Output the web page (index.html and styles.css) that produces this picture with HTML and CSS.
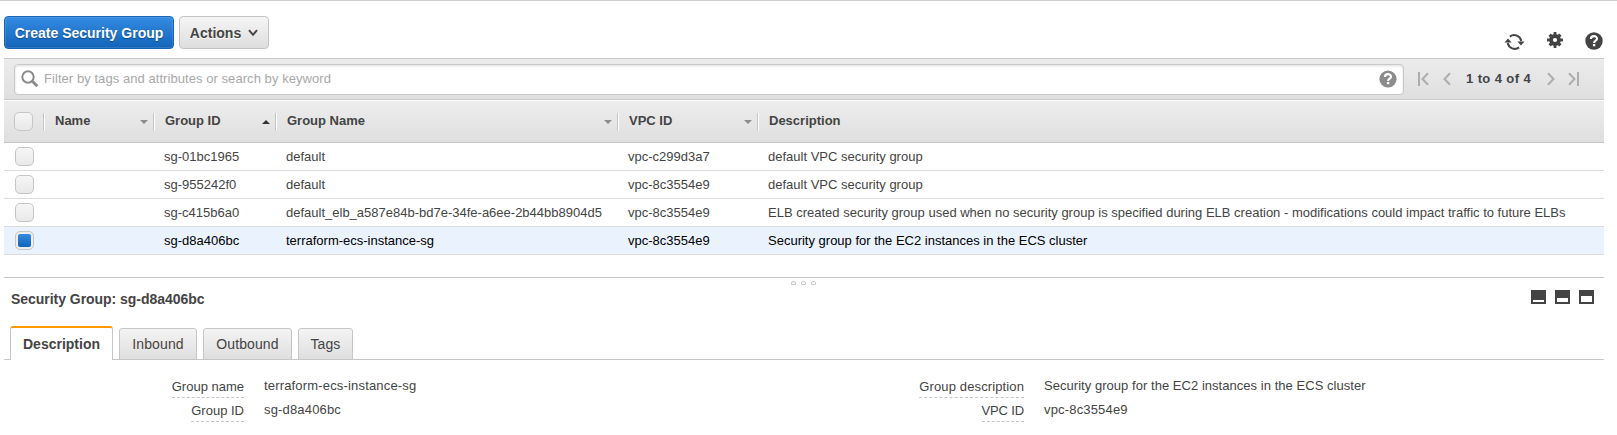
FILE: index.html
```html
<!DOCTYPE html>
<html lang="en">
<head>
<meta charset="utf-8">
<title>Security Groups</title>
<link rel="stylesheet" href="styles.css">
</head>
<body>
<main class="console">
  <div class="toolbar">
    <button class="btn primary"><span>Create Security Group</span></button>
    <button class="btn actions"><span>Actions</span><svg width="10" height="8" viewBox="0 0 10 8"><path d="M1 1.2 5 5.8 9 1.2" fill="none" stroke="#444" stroke-width="2"/></svg></button>
    <div class="tools">
      <svg class="refresh" width="21" height="18" viewBox="0 0 20 18"><g fill="none" stroke="#444" stroke-width="2"><path d="M5.4 3.6A7.2 7.2 0 0 1 16.8 8"/><path d="M14.6 14.4A7.2 7.2 0 0 1 3.2 10"/></g><path d="M12.8 8.4H20l-3.5 4zM0 9.6h7.2L3.5 5.6z" fill="#444"/></svg>
      <svg class="gear" width="16" height="16" viewBox="0 0 16 16"><g fill="#444"><circle cx="8" cy="8" r="5.9"/><g><rect x="6.6" width="2.8" height="16"/><rect y="6.6" width="16" height="2.8"/></g><g transform="rotate(45 8 8)"><rect x="6.4" y=".4" width="3.2" height="15.2"/><rect x=".4" y="6.4" width="15.2" height="3.2"/></g></g><circle cx="8" cy="8" r="2.1" fill="#fff"/></svg>
      <svg class="help" width="18" height="18" viewBox="0 0 18 18"><circle cx="9" cy="9" r="8.7" fill="#444"/><path d="M5.9 7C5.9 3.2 12 3.2 12 6.7 12 8.7 9.1 8.7 9.1 11" fill="none" stroke="#fff" stroke-width="2.1"/><rect x="7.9" y="12" width="2.4" height="2.3" fill="#fff"/></svg>
    </div>
  </div>

  <div class="filterbar">
    <div class="search">
      <svg width="18" height="18" viewBox="0 0 18 18"><circle cx="7" cy="7" r="5.7" fill="none" stroke="#8c8c8c" stroke-width="2"/><path d="m11.3 11.3 5 5" stroke="#8c8c8c" stroke-width="3"/></svg>
      <span class="placeholder">Filter by tags and attributes or search by keyword</span>
      <svg class="hint" width="18" height="18" viewBox="0 0 18 18"><circle cx="9" cy="9" r="8.6" fill="#8c8c8c"/><path d="M5.9 7C5.9 3.2 12 3.2 12 6.7 12 8.7 9.1 8.7 9.1 11" fill="none" stroke="#fff" stroke-width="2.1"/><rect x="7.9" y="12" width="2.4" height="2.3" fill="#fff"/></svg>
    </div>
    <div class="pager">
      <svg width="33" height="14" viewBox="0 0 33 14"><path d="M1 0v14M10 1.2 4.5 7l5.5 5.8M32 1.2 26.5 7l5.5 5.8" fill="none" stroke="#adadad" stroke-width="2"/></svg>
      <span>1 to 4 of 4</span>
      <svg width="32" height="14" viewBox="0 0 32 14"><path d="M1 1.2 6.5 7 1 12.8M22 1.2 27.5 7 22 12.8M31 0v14" fill="none" stroke="#adadad" stroke-width="2"/></svg>
    </div>
  </div>

  <div class="grid head">
    <div class="pick"><i class="box"></i></div>
    <div class="col"><span>Name</span><i class="sort"></i></div>
    <div class="col"><span>Group ID</span><i class="sort up"></i></div>
    <div class="col"><span>Group Name</span><i class="sort"></i></div>
    <div class="col"><span>VPC ID</span><i class="sort"></i></div>
    <div class="col"><span>Description</span></div>
  </div>
  <div class="grid row"><div class="pick"><i class="box"></i></div><span></span><span>sg-01bc1965</span><span>default</span><span>vpc-c299d3a7</span><span>default VPC security group</span></div>
  <div class="grid row"><div class="pick"><i class="box"></i></div><span></span><span>sg-955242f0</span><span>default</span><span>vpc-8c3554e9</span><span>default VPC security group</span></div>
  <div class="grid row"><div class="pick"><i class="box"></i></div><span></span><span>sg-c415b6a0</span><span>default_elb_a587e84b-bd7e-34fe-a6ee-2b44bb8904d5</span><span>vpc-8c3554e9</span><span>ELB created security group used when no security group is specified during ELB creation - modifications could impact traffic to future ELBs</span></div>
  <div class="grid row selected"><div class="pick"><i class="box checked"></i></div><span></span><span>sg-d8a406bc</span><span>terraform-ecs-instance-sg</span><span>vpc-8c3554e9</span><span>Security group for the EC2 instances in the ECS cluster</span></div>

  <div class="splitter"><i></i><i></i><i></i></div>
  <div class="detail-head">
    <h2>Security Group: sg-d8a406bc</h2>
    <div class="panes"><i class="pane low"></i><i class="pane mid"></i><i class="pane high"></i></div>
  </div>
  <div class="tabs">
    <div class="tab active"><span>Description</span></div>
    <div class="tab inbound"><span>Inbound</span></div>
    <div class="tab outbound"><span>Outbound</span></div>
    <div class="tab tags"><span>Tags</span></div>
  </div>
  <div class="details">
    <div class="label"><span>Group name</span></div><div class="value code">terraform-ecs-instance-sg</div>
    <div class="label"><span class="wide">Group description</span></div><div class="value">Security group for the EC2 instances in the ECS cluster</div>
    <div class="label"><span>Group ID</span></div><div class="value code">sg-d8a406bc</div>
    <div class="label"><span class="narrow">VPC ID</span></div><div class="value code">vpc-8c3554e9</div>
  </div>
</main>
</body>
</html>
```
FILE: styles.css
```css
* { box-sizing: border-box; }
body {
  margin: 0;
  height: 435px;
  overflow: hidden;
  border-top: 1px solid #ccc;
  background: #fff;
  color: #444;
  font: 13px/16px "Liberation Sans", Arial, sans-serif;
}
svg { display: block; flex: none; }
.console { width: 1600px; margin-left: 4px; }
.console .toolbar { width: 1599px; }

.toolbar { display: flex; height: 57px; padding-top: 15px; gap: 5px; }
.btn {
  display: flex;
  align-items: center;
  justify-content: center;
  height: 33px;
  padding: 0;
  border: 1px solid #c4c4c4;
  border-radius: 4px;
  background: linear-gradient(#f5f5f5, #dedede);
  color: #444;
  font: bold 14px/16px "Liberation Sans", Arial, sans-serif;
  white-space: nowrap;
}
.primary {
  width: 170px;
  border-color: #1865b8;
  background: linear-gradient(#348be2, #1264b8);
  box-shadow: inset 0 0 0 1px #ffffff20;
  color: #fff;
  text-shadow: 0 1px 1px #0e4c90;
}
.actions { width: 90px; gap: 7px; text-shadow: 0 1px #fff; }
.tools { display: flex; margin-left: auto; }
.refresh { margin-top: 17px; }
.gear { margin: 16px 22px 0 22px; }
.help { margin-top: 16px; }

.filterbar {
  display: flex;
  align-items: center;
  height: 42px;
  padding-left: 10px;
  width: 1600px;
  border: solid #c9c9c9;
  border-width: 1px 0;
  background: linear-gradient(#ececec, #dfdfdf);
}
.search {
  display: flex;
  flex: none;
  align-items: center;
  width: 1390px;
  height: 31px;
  padding: 0 6px;
  border: 1px solid #c8c8c8;
  border-radius: 4px;
  background: #fff;
  box-shadow: inset 0 1px 3px #0002;
  color: #a8a8a8;
}
.placeholder { margin-left: 5px; letter-spacing: .06px; }
.hint { margin-left: auto; }
.pager { display: flex; align-items: center; margin-left: 14px; }
.pager span { width: 66px; margin: 0 15px; white-space: nowrap; font-weight: bold; letter-spacing: .4px; }

.grid { display: grid; grid-template-columns: 40px 110px 122px 342px 140px 1fr; align-items: center; }
.head {
  height: 43px;
  border-top: 1px solid #fff;
  border-bottom: 1px solid #c4c4c4;
  background: linear-gradient(#ededed, #dfdfdf);
  font-weight: bold;
}
.pick { padding-left: 11px; }
.head .pick { padding-left: 10px; }
.col {
  display: flex;
  align-items: center;
  justify-content: space-between;
  height: 18px;
  padding: 0 6px 0 10px;
  border-left: 1px solid #fff;
  box-shadow: -1px 0 #c6c6c6;
}
.col span { padding-bottom: 2px; }
.sort { border: solid transparent; border-width: 4px 4px 0; border-top-color: #8c8c8c; }
.sort.up { border-width: 0 4px 4px; border-bottom-color: #333; }
.box {
  display: block;
  width: 19px;
  height: 19px;
  border: 1px solid #c6c6c6;
  border-radius: 5px;
  background: linear-gradient(#f6f6f6, #e8e8e8);
}
.checked { padding: 2px; background: #ededed; }
.checked::before {
  content: "";
  display: block;
  width: 13px;
  height: 13px;
  border-radius: 2px;
  background: linear-gradient(#348be2, #1264b8);
}
.row { height: 28px; border-bottom: 1px solid #dcdcdc; }
.row span { padding-left: 10px; white-space: nowrap; }
.selected { background: #eaf2fe; color: #000; }

.splitter {
  display: flex;
  justify-content: center;
  gap: 5px;
  height: 14px;
  margin-top: 22px;
  padding: 3px 2px 0 0;
  border-top: 1px solid #c6c6c6;
}
.splitter i { width: 5px; height: 4px; border: 1px solid #c8c8c8; border-radius: 2px 2px 0 0; }
.detail-head { display: flex; justify-content: space-between; height: 35px; padding: 0 10px 0 7px; }
h2 { margin: 0; font-size: 14px; line-height: 16px; white-space: nowrap; letter-spacing: -.04px; }
.panes { display: flex; gap: 9px; }
.pane { width: 15px; height: 14px; margin-top: -1px; border: 2px solid #444; background: #fff; }
.low { border-top-width: 10px; }
.mid { border-top-width: 8px; }
.high { border-top-width: 6px; }

.tabs { display: flex; align-items: flex-end; gap: 6px; height: 34px; padding-left: 6px; box-shadow: inset 0 -1px #c6c6c6; }
.tab {
  display: flex;
  align-items: center;
  justify-content: center;
  height: 32px;
  border: 1px solid #c6c6c6;
  border-radius: 3px 3px 0 0;
  background: linear-gradient(#f4f4f4, #dfdfdf);
  font-size: 14px;
  letter-spacing: .1px;
  white-space: nowrap;
}
.active { width: 103px; height: 34px; border-top: 2px solid #f90; border-bottom: 0; background: #fff; font-weight: bold; letter-spacing: 0; }
.inbound { width: 78px; }
.outbound { width: 89px; }
.tags { width: 55px; }

.details { display: grid; grid-template-columns: 240px 540px 240px 1fr; grid-auto-rows: 24px; padding-top: 18px; }
.label { text-align: right; }
.label span { display: inline-block; height: 20px; padding-top: 1px; border-bottom: 1px dashed #c6c6c6; white-space: nowrap; }
.label .wide { letter-spacing: .12px; }
.label .narrow { letter-spacing: -.15px; }
.value { padding-left: 20px; white-space: nowrap; letter-spacing: .04px; }
.code { letter-spacing: .17px; }
```
